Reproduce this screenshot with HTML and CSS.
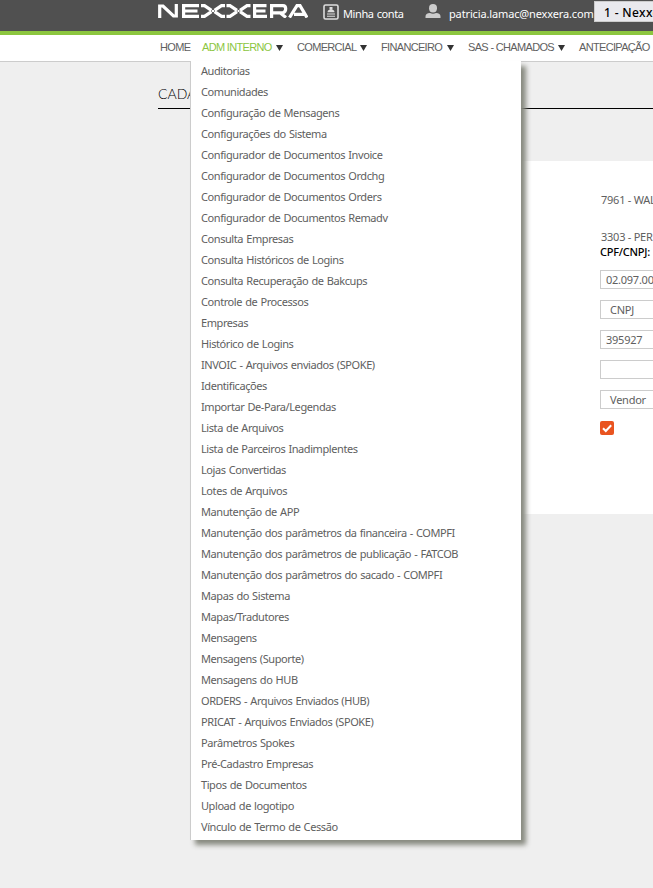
FILE: index.html
```html
<!DOCTYPE html>
<html lang="pt-BR">
<head>
<meta charset="utf-8">
<title>Nexxera</title>
<link rel="stylesheet" href="styles.css">
</head>
<body>
<header class="topbar">
  <svg class="logo" viewBox="0 0 150 14" role="img" aria-label="Nexxera">
    <g fill="none" stroke="#fff" stroke-width="3.2">
      <path d="M1.700 14V2H5L15.500 12H18.300V0"/>
      <path d="M41 1.600H25.600V12.400H41M25.600 7H39.500"/>
      <path d="M43 1.600H46.500L53.500 6.300M43 12.400H46.500L53.500 7.700M67 1.600H63.500L56.500 6.300M67 12.400H63.500L56.500 7.700"/>
      <path d="M54 7H56" stroke-width="2"/>
      <path d="M68.500 1.600H72L79 6.300M68.500 12.400H72L79 7.700M92.500 1.600H89L82 6.300M92.500 12.400H89L82 7.700"/>
      <path d="M79.500 7H81.500" stroke-width="2"/>
      <path d="M108.500 1.600H96.600V12.400H109M96.600 7H107.500"/>
      <path d="M113.600 14V1.600H125Q127.700 1.600 127.700 4.800T125 8.800H114M122 8.800L128 13.500"/>
      <path d="M131.500 13.500L139 1.600H142L149 13.500M136 10.300H146"/>
    </g>
  </svg>
  <a class="account">
    <svg class="icon-card" viewBox="0 0 16 16"><rect x="1" y="1" width="14" height="14" rx="1.500" fill="none" stroke="#ddd" stroke-width="1.600"/><path d="M6.500 3h3v2.500h-3zM4.500 8.200Q4.500 5.500 8 5.500t3.500 2.700zM4 9.500h8v1H4zM4 11.800h8v1H4z" fill="#ddd"/></svg>
    <span>Minha conta</span>
  </a>
  <a class="user">
    <svg class="icon-user" viewBox="0 0 16 15"><ellipse cx="8" cy="4.200" rx="4" ry="4.200" fill="#ccc"/><path d="M.5 14v-1.500Q.5 9 5 9q3 1.500 6 0 4.500 0 4.500 3.500V14z" fill="#ccc"/></svg>
    <span>patricia.lamac@nexxera.com</span>
  </a>
  <div class="company">1 - Nexxera</div>
</header>
<nav class="nav">
  <a class="home">HOME</a>
  <a class="adm active">ADM INTERNO<i></i></a>
  <a class="com">COMERCIAL<i></i></a>
  <a class="fin">FINANCEIRO<i></i></a>
  <a class="sas">SAS - CHAMADOS<i></i></a>
  <a class="ant">ANTECIPAÇÃO</a>
</nav>
<main class="page">
  <h1><span>CADA</span></h1>
  <section class="panel">
    <p class="parent">7961 - WAL</p>
    <p class="child">3303 - PER</p>
    <label>CPF/CNPJ:</label>
    <div class="field">02.097.00</div>
    <div class="field select">CNPJ</div>
    <div class="field">395927</div>
    <div class="field"></div>
    <div class="field select">Vendor</div>
    <svg class="check" viewBox="0 0 14 14"><rect width="14" height="14" rx="2" fill="#e95420"/><path d="M3 7.200L5.800 10 11.200 4.200" fill="none" stroke="#fff" stroke-width="2"/></svg>
  </section>
  <ul class="menu">
    <li>Auditorias</li>
    <li>Comunidades</li>
    <li>Configuração de Mensagens</li>
    <li>Configurações do Sistema</li>
    <li>Configurador de Documentos Invoice</li>
    <li>Configurador de Documentos Ordchg</li>
    <li>Configurador de Documentos Orders</li>
    <li>Configurador de Documentos Remadv</li>
    <li>Consulta Empresas</li>
    <li>Consulta Históricos de Logins</li>
    <li>Consulta Recuperação de Bakcups</li>
    <li>Controle de Processos</li>
    <li>Empresas</li>
    <li>Histórico de Logins</li>
    <li>INVOIC - Arquivos enviados (SPOKE)</li>
    <li>Identificações</li>
    <li>Importar De-Para/Legendas</li>
    <li>Lista de Arquivos</li>
    <li>Lista de Parceiros Inadimplentes</li>
    <li>Lojas Convertidas</li>
    <li>Lotes de Arquivos</li>
    <li>Manutenção de APP</li>
    <li>Manutenção dos parâmetros da financeira - COMPFI</li>
    <li>Manutenção dos parâmetros de publicação - FATCOB</li>
    <li>Manutenção dos parâmetros do sacado - COMPFI</li>
    <li>Mapas do Sistema</li>
    <li>Mapas/Tradutores</li>
    <li>Mensagens</li>
    <li>Mensagens (Suporte)</li>
    <li>Mensagens do HUB</li>
    <li>ORDERS - Arquivos Enviados (HUB)</li>
    <li>PRICAT - Arquivos Enviados (SPOKE)</li>
    <li>Parâmetros Spokes</li>
    <li>Pré-Cadastro Empresas</li>
    <li>Tipos de Documentos</li>
    <li>Upload de logotipo</li>
    <li>Vínculo de Termo de Cessão</li>
  </ul>
</main>
</body>
</html>
```
FILE: styles.css
```css
* { box-sizing: border-box; }
body {
  margin: 0;
  width: 653px;
  height: 888px;
  overflow: hidden;
  background: #efefef;
  color: #606060;
  font: 11px/15px "Trebuchet MS", "Noto Sans", sans-serif;
}
.topbar {
  display: flex;
  height: 35px;
  padding-left: 158px;
  overflow: hidden;
  background: #505050;
  border-bottom: 4px solid #8cc63f;
  color: #fff;
  white-space: nowrap;
}
.topbar > * { flex: none; }
.topbar svg { display: block; flex: none; }
.logo { width: 150px; height: 14px; margin-top: 4px; }
.account, .user { display: flex; height: 31px; }
.account { width: 102px; margin-left: 15px; }
.user { width: 169px; }
.account span, .user span { margin-top: 6px; }
.account span { margin-left: 4px; letter-spacing: -.4px; word-spacing: .6px; }
.user span { margin-left: 8px; letter-spacing: -.14px; }
.icon-card { width: 16px; height: 16px; margin-top: 4px; }
.icon-user { width: 16px; height: 15px; margin-top: 4px; }
.company {
  width: 100px;
  height: 21px;
  margin-top: 1px;
  padding-left: 9px;
  border: 1px solid #ccc;
  background: #e9e9ed;
  color: #000;
  font-size: 12px;
  font-weight: 500;
  line-height: 22px;
  letter-spacing: .35px;
}
.nav {
  display: flex;
  height: 27px;
  padding-left: 160px;
  overflow: hidden;
  background: #fff;
  border-bottom: 1px solid #ccc;
  font: 11px/25px "Liberation Sans", sans-serif;
  letter-spacing: -.67px;
  white-space: nowrap;
}
.nav a { display: flex; flex: none; justify-content: space-between; margin-right: 14px; }
.nav .home { width: 30px; margin-right: 12px; }
.nav .adm { width: 81px; }
.nav .com { width: 70px; }
.nav .fin { width: 73px; }
.nav .sas { width: 97px; }
.nav .active { color: #8cc63f; }
.nav i {
  margin-top: 10px;
  width: 7px;
  height: 6px;
  background: #333;
  clip-path: polygon(0 0, 100% 0, 50% 100%);
}
.page { position: relative; height: 826px; }
h1 {
  height: 47px;
  margin: 0 0 0 158px;
  padding-top: 22px;
  border-bottom: 1px solid #000;
  color: #000;
  font: 300 14px/19px Lato, sans-serif;
}
h1 span {
  display: block;
  width: 32px;
  overflow: hidden;
}
.panel {
  height: 353px;
  margin: 52px 0 0 190px;
  padding: 31px 0 0 410px;
  background: #fff;
  white-space: nowrap;
  overflow: hidden;
  letter-spacing: -.25px;
}
.panel p { margin: 0; padding-left: 1px; }
.panel .child { margin-top: 22px; }
.panel label { display: block; color: #000; font-weight: 500; line-height: 14px; margin: 1px 0 11px; }
.field {
  width: 120px;
  height: 19px;
  margin-bottom: 11px;
  padding-left: 5px;
  border: 1px solid #ccc;
  line-height: 18px;
}
.select { padding-left: 9px; }
.check { display: block; width: 14px; height: 14px; margin-top: 12px; }
.menu {
  position: absolute;
  left: 190px;
  top: -1px;
  width: 331px;
  height: 779px;
  margin: 0;
  padding: 0 0 0 10px;
  border-left: 1px solid #ccc;
  background: #fff;
  box-shadow: 5px 5px 5px #888a80;
  list-style: none;
  white-space: nowrap;
  letter-spacing: -.42px;
  word-spacing: .7px;
}
.menu li { height: 21px; line-height: 20px; }
```
